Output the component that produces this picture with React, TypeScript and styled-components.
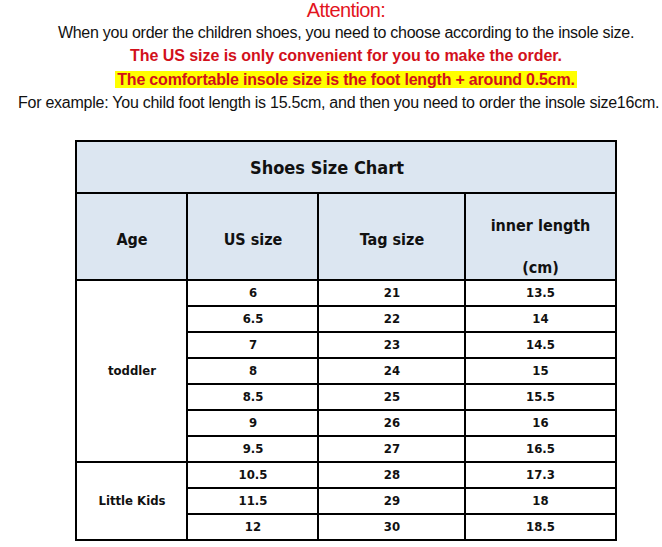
import React from "react";
import styled, { createGlobalStyle } from "styled-components";

const GlobalStyle = createGlobalStyle`
  html, body { margin: 0; padding: 0; background: #ffffff; }
  body { font-family: "Liberation Sans", Arial, sans-serif; }
`;

const Page = styled.main`
  width: 662px;
  box-sizing: border-box;
  padding-left: 30px;
  display: flex;
  flex-direction: column;
  align-items: center;
`;

const Notice = styled.section`
  width: 100%;
  display: flex;
  flex-direction: column;
  align-items: center;
`;

const Heading = styled.h1`
  margin: 0;
  height: 21px;
  font: 400 20px/21px "Liberation Sans", Arial, sans-serif;
  letter-spacing: -0.6px;
  color: #e3141d;
`;

const Line = styled.p<{ $tone?: "plain" | "alert"; $h: number; $track: number }>`
  margin: 0;
  white-space: nowrap;
  height: ${(p) => p.$h}px;
  line-height: ${(p) => p.$h}px;
  font-size: 16px;
  font-weight: ${(p) => (p.$tone === "alert" ? 700 : 400)};
  letter-spacing: ${(p) => p.$track}px;
  color: ${(p) => (p.$tone === "alert" ? "#d2101b" : "#111111")};
`;

const ExampleLine = styled(Line)`
  align-self: flex-start;
  margin-left: -12px;
`;

const Highlight = styled.span`
  display: inline-block;
  background: #ffff00;
  line-height: 17px;
  padding: 0 2px;
`;

const Chart = styled.table`
  margin-top: 26px;
  width: 541px;
  border-collapse: collapse;
  table-layout: fixed;
  font-family: "DejaVu Sans Condensed", "DejaVu Sans", sans-serif;
  font-weight: 700;
  color: #111111;
`;

const TitleCell = styled.th`
  height: 50px;
  padding: 0 38px 0 0;
  border: 2px solid #000;
  background: #dce6f1;
  font-size: 18px;
  font-weight: 700;
  text-align: center;
  vertical-align: middle;
`;

const HeadCell = styled.th<{ $offset?: number }>`
  height: 87px;
  padding: ${(p) => p.$offset ?? 5}px 0 0 0;
  box-sizing: border-box;
  border: 2px solid #000;
  background: #dce6f1;
  font-size: 16px;
  font-weight: 700;
  text-align: center;
  vertical-align: middle;
`;

const Stack = styled.span`
  display: flex;
  flex-direction: column;
  align-items: center;
  gap: 26px;
  line-height: 16px;
`;

const Cell = styled.td`
  height: 24px;
  padding: 0;
  border: 2px solid #000;
  font-size: 13px;
  line-height: 16px;
  text-align: center;
  vertical-align: middle;
`;

type Group = { label: string; rows: [string, string, string][] };

const groups: Group[] = [
  {
    label: "toddler",
    rows: [
      ["6", "21", "13.5"],
      ["6.5", "22", "14"],
      ["7", "23", "14.5"],
      ["8", "24", "15"],
      ["8.5", "25", "15.5"],
      ["9", "26", "16"],
      ["9.5", "27", "16.5"],
    ],
  },
  {
    label: "Little Kids",
    rows: [
      ["10.5", "28", "17.3"],
      ["11.5", "29", "18"],
      ["12", "30", "18.5"],
    ],
  },
];

export default function App() {
  return (
    <>
      <GlobalStyle />
      <Page>
        <Notice>
          <Heading>Attention:</Heading>
          <Line $h={23} $track={-0.27}>
            When you order the children shoes, you need to choose according to the insole size.
          </Line>
          <Line $h={23} $tone="alert" $track={-0.05}>
            The US size is only convenient for you to make the order.
          </Line>
          <Line $h={25} $tone="alert" $track={-0.2}>
            <Highlight>The comfortable insole size is the foot length + around 0.5cm.</Highlight>
          </Line>
          <ExampleLine $h={22} $track={-0.25}>
            For example: You child foot length is 15.5cm, and then you need to order the insole size16cm.
          </ExampleLine>
        </Notice>
        <Chart>
          <colgroup>
            <col style={{ width: 111 }} />
            <col style={{ width: 131 }} />
            <col style={{ width: 147 }} />
            <col style={{ width: 150 }} />
          </colgroup>
          <thead>
            <tr>
              <TitleCell colSpan={4}>Shoes Size Chart</TitleCell>
            </tr>
            <tr>
              <HeadCell>Age</HeadCell>
              <HeadCell>US size</HeadCell>
              <HeadCell>Tag size</HeadCell>
              <HeadCell $offset={20}>
                <Stack>
                  <span>inner length</span>
                  <span>(cm)</span>
                </Stack>
              </HeadCell>
            </tr>
          </thead>
          <tbody>
            {groups.map((g) =>
              g.rows.map((r, i) => (
                <tr key={g.label + r[0]}>
                  {i === 0 && <Cell rowSpan={g.rows.length}>{g.label}</Cell>}
                  <Cell>{r[0]}</Cell>
                  <Cell>{r[1]}</Cell>
                  <Cell>{r[2]}</Cell>
                </tr>
              ))
            )}
          </tbody>
        </Chart>
      </Page>
    </>
  );
}
